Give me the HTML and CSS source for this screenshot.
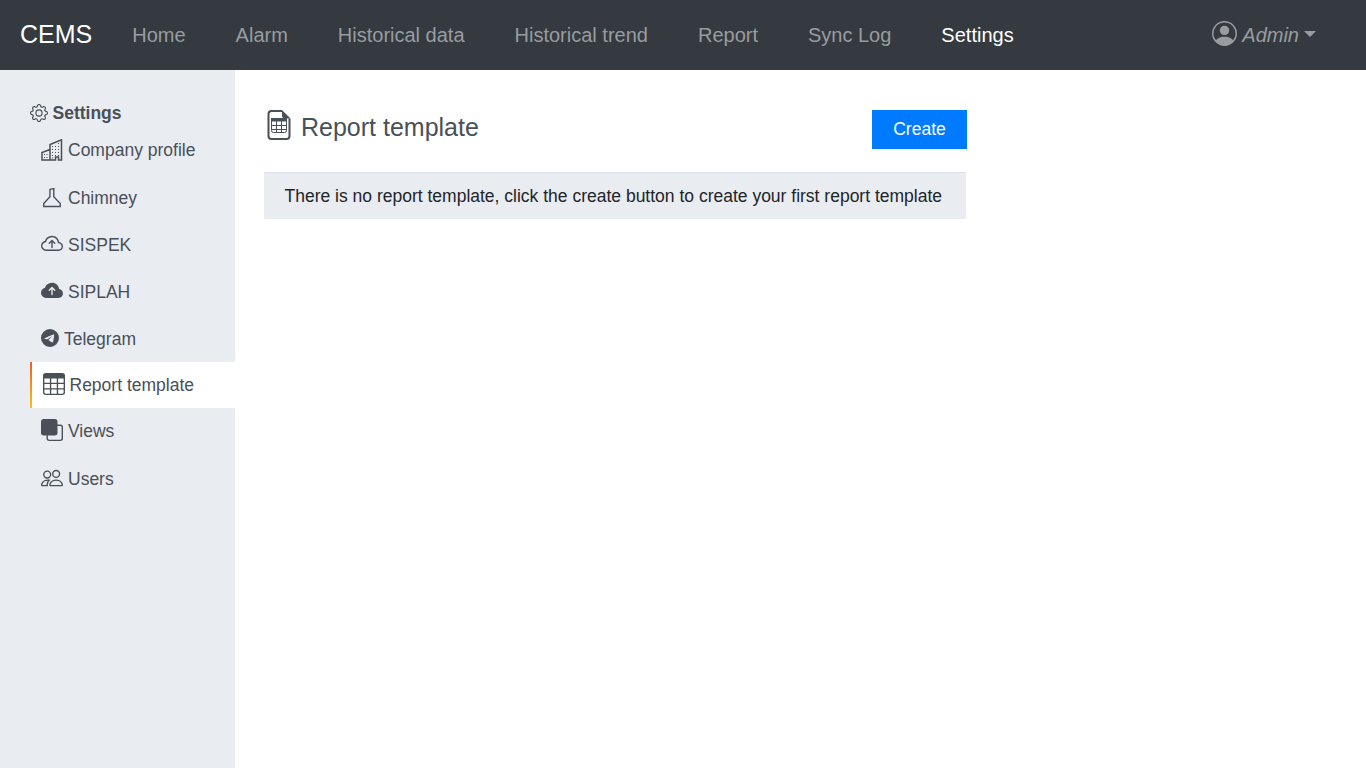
FILE: index.html
```html
<!DOCTYPE html>
<html lang="en">
<head>
<meta charset="utf-8">
<title>CEMS</title>
<link rel="stylesheet" href="styles.css">
</head>
<body>
<header class="navbar">
  <a class="brand">CEMS</a>
  <nav class="nav">
    <a>Home</a><a>Alarm</a><a>Historical data</a><a>Historical trend</a><a>Report</a><a>Sync Log</a><a class="current">Settings</a>
  </nav>
  <div class="account">
    <svg class="avatar" viewBox="0 0 16 16"><path d="M11 6a3 3 0 1 1-6 0 3 3 0 0 1 6 0z"/><path fill-rule="evenodd" d="M0 8a8 8 0 1 1 16 0A8 8 0 0 1 0 8zm8-7a7 7 0 0 0-5.468 11.37C3.242 11.226 4.805 10 8 10s4.757 1.225 5.468 2.37A7 7 0 0 0 8 1z"/></svg>
    <em>Admin</em><span class="caret"></span>
  </div>
</header>
<div class="layout">
  <aside class="sidebar">
    <h2 class="side-title"><svg class="icon small" viewBox="0 0 16 16"><path d="M8 4.754a3.246 3.246 0 1 0 0 6.492 3.246 3.246 0 0 0 0-6.492zM5.754 8a2.246 2.246 0 1 1 4.492 0 2.246 2.246 0 0 1-4.492 0z"/><path d="M9.796 1.343c-.527-1.79-3.065-1.79-3.592 0l-.094.319a.873.873 0 0 1-1.255.52l-.292-.16c-1.64-.892-3.433.902-2.54 2.541l.159.292a.873.873 0 0 1-.52 1.255l-.319.094c-1.79.527-1.79 3.065 0 3.592l.319.094a.873.873 0 0 1 .52 1.255l-.16.292c-.892 1.64.901 3.434 2.541 2.54l.292-.159a.873.873 0 0 1 1.255.52l.094.319c.527 1.79 3.065 1.79 3.592 0l.094-.319a.873.873 0 0 1 1.255-.52l.292.16c1.64.893 3.434-.902 2.54-2.541l-.159-.292a.873.873 0 0 1 .52-1.255l.319-.094c1.79-.527 1.79-3.065 0-3.592l-.319-.094a.873.873 0 0 1-.52-1.255l.16-.292c.893-1.64-.902-3.433-2.541-2.54l-.292.159a.873.873 0 0 1-1.255-.52l-.094-.319zm-2.633.283c.246-.835 1.428-.835 1.674 0l.094.319a1.873 1.873 0 0 0 2.693 1.115l.291-.16c.764-.415 1.6.42 1.184 1.185l-.159.292a1.873 1.873 0 0 0 1.116 2.692l.318.094c.835.246.835 1.428 0 1.674l-.319.094a1.873 1.873 0 0 0-1.115 2.693l.16.291c.415.764-.42 1.6-1.185 1.184l-.291-.159a1.873 1.873 0 0 0-2.693 1.116l-.094.318c-.246.835-1.428.835-1.674 0l-.094-.319a1.873 1.873 0 0 0-2.692-1.115l-.292.16c-.764.415-1.6-.42-1.184-1.185l.159-.291A1.873 1.873 0 0 0 1.945 8.93l-.319-.094c-.835-.246-.835-1.428 0-1.674l.319-.094A1.873 1.873 0 0 0 3.06 4.377l-.16-.292c-.415-.764.42-1.6 1.185-1.184l.292.159a1.873 1.873 0 0 0 2.692-1.115l.094-.319z"/></svg>Settings</h2>
    <ul class="menu">
      <li class="tall first"><svg class="icon" viewBox="0 0 22 22"><path d="M1 21V13.500L9 10.500V5.500L20.500 .8V21H17.500V18H14.500V21zM9 10.500V21" fill="none" stroke="currentColor" stroke-width="1.500"/><path d="M3 15h1v1H3zM5.500 15h1v1h-1zM3 18h1v1H3zM5.500 18h1v1h-1zM11 7h1v1h-1zM14 7h1v1h-1zM17 7h1v1h-1zM17 4h1v1h-1zM11 10h1v1h-1zM14 10h1v1h-1zM17 10h1v1h-1zM11 13h1v1h-1zM14 13h1v1h-1zM17 13h1v1h-1zM11 16h1v1h-1zM14 16h1v1h-1zM17 16h1v1h-1zM11 18.500h1v1h-1z"/></svg>Company profile</li>
      <li><svg class="icon" viewBox="0 0 16 16"><path d="M6.500 1.700L9.300 1.200V7L14 12V14.200H2V12L6.500 7z" fill="none" stroke="currentColor"/></svg>Chimney</li>
      <li><svg class="icon lift" viewBox="0 0 16 16"><path d="M7.646 5.146a.5.5 0 0 1 .708 0l2 2a.5.5 0 0 1-.708.708L8.5 6.707V10.5a.5.5 0 0 1-1 0V6.707L6.354 7.854a.5.5 0 1 1-.708-.708l2-2z"/><path d="M4.406 3.342A5.53 5.53 0 0 1 8 2c2.69 0 4.923 2 5.166 4.579C14.758 6.804 16 8.137 16 9.773 16 11.569 14.502 13 12.687 13H3.781C1.708 13 0 11.366 0 9.318c0-1.763 1.266-3.223 2.942-3.593.143-.863.698-1.723 1.464-2.383zm.653.757c-.757.653-1.153 1.44-1.153 2.056v.448l-.445.049C2.064 6.805 1 7.952 1 9.318 1 10.785 2.23 12 3.781 12h8.906C13.98 12 15 10.988 15 9.773c0-1.216-1.02-2.228-2.313-2.228h-.5v-.5C12.188 4.825 10.328 3 8 3a4.53 4.53 0 0 0-2.941 1.1z"/></svg>SISPEK</li>
      <li><svg class="icon lift" viewBox="0 0 16 16"><path d="M8 2a5.53 5.53 0 0 0-3.594 1.342c-.766.66-1.321 1.52-1.464 2.383C1.266 6.095 0 7.555 0 9.318 0 11.366 1.708 13 3.781 13h8.906C14.502 13 16 11.57 16 9.773c0-1.636-1.242-2.969-2.834-3.194C12.923 3.999 10.69 2 8 2zm2.354 5.146a.5.5 0 0 1-.708.708L8.5 6.707V10.5a.5.5 0 0 1-1 0V6.707L6.354 7.854a.5.5 0 1 1-.708-.708l2-2a.5.5 0 0 1 .708 0l2 2z"/></svg>SIPLAH</li>
      <li class="short"><svg class="icon small" viewBox="0 0 16 16"><path d="M16 8A8 8 0 1 1 0 8a8 8 0 0 1 16 0zM8.287 5.906c-.778.324-2.334.994-4.666 2.01-.378.15-.577.298-.595.442-.03.243.275.339.69.47l.175.055c.408.133.958.288 1.243.294.26.006.549-.1.868-.32 2.179-1.471 3.304-2.214 3.374-2.23.05-.012.12-.026.166.016.047.041.042.12.037.141-.03.129-1.227 1.241-1.846 1.817-.193.18-.33.307-.358.336a8.154 8.154 0 0 1-.188.186c-.38.366-.664.64.015 1.088.327.216.589.393.85.571.284.194.568.387.936.629.093.06.183.125.27.187.331.236.63.448.997.414.214-.02.435-.22.547-.82.265-1.417.786-4.486.906-5.751a1.426 1.426 0 0 0-.013-.315.337.337 0 0 0-.114-.217.526.526 0 0 0-.31-.093c-.3.005-.763.166-2.984 1.09z"/></svg>Telegram</li>
      <li class="active"><svg class="icon" viewBox="0 0 16 16"><path d="M0 2a2 2 0 0 1 2-2h12a2 2 0 0 1 2 2v12a2 2 0 0 1-2 2H2a2 2 0 0 1-2-2V2zm15 2h-4v3h4V4zm0 4h-4v3h4V8zm0 4h-4v3h3a1 1 0 0 0 1-1v-2zm-5 3v-3H6v3h4zm-5 0v-3H1v2a1 1 0 0 0 1 1h3zm-4-4h4V8H1v3zm0-4h4V4H1v3zm5-3v3h4V4H6zm4 4H6v3h4V8z"/></svg>Report template</li>
      <li><svg class="icon lift" viewBox="0 0 16 16"><path d="M0 2a2 2 0 0 1 2-2h8a2 2 0 0 1 2 2v2h2a2 2 0 0 1 2 2v8a2 2 0 0 1-2 2H6a2 2 0 0 1-2-2v-2H2a2 2 0 0 1-2-2V2zm5 10v2a1 1 0 0 0 1 1h8a1 1 0 0 0 1-1V6a1 1 0 0 0-1-1h-2v5a2 2 0 0 1-2 2H5z"/></svg>Views</li>
      <li class="tall"><svg class="icon" viewBox="0 0 16 16"><path d="M15 14s1 0 1-1-1-4-5-4-5 3-5 4 1 1 1 1h8zm-7.978-1A.261.261 0 0 1 7 12.996c.001-.264.167-1.03.76-1.72C8.312 10.629 9.282 10 11 10c1.717 0 2.687.63 3.24 1.276.593.69.758 1.457.76 1.72l-.008.002a.274.274 0 0 1-.014.002H7.022zM11 7a2 2 0 1 0 0-4 2 2 0 0 0 0 4zm3-2a3 3 0 1 1-6 0 3 3 0 0 1 6 0zM6.936 9.28a5.88 5.88 0 0 0-1.23-.247A7.35 7.35 0 0 0 5 9c-4 0-5 3-5 4 0 .667.333 1 1 1h4.216A2.238 2.238 0 0 1 5 13c0-1.01.377-2.042 1.09-2.904.243-.294.526-.569.846-.816zM4.92 10A5.493 5.493 0 0 0 4 13H1c0-.26.164-1.03.76-1.724.545-.636 1.492-1.256 3.16-1.275zM1.5 5.5a3 3 0 1 1 6 0 3 3 0 0 1-6 0zm3-2a2 2 0 1 0 0 4 2 2 0 0 0 0-4z"/></svg>Users</li>
    </ul>
  </aside>
  <main class="content">
    <div class="page-head">
      <h1><svg class="page-icon" viewBox="0 0 30 30"><path d="M18 1H7.500Q4.500 1 4.500 4V26Q4.500 29 7.500 29H22.500Q25.500 29 25.500 26V8.500" fill="none" stroke="currentColor" stroke-width="2"/><path d="M18 0L26.500 8.500H21Q18 8.500 18 5.500z"/><path d="M7.500 9H22.500V20.500Q22.500 22.500 20.500 22.500H9.500Q7.500 22.500 7.500 20.500z" fill="none" stroke="currentColor"/><path d="M7 8H23V11.500H7z"/><path d="M7.500 15.500H22.500M7.500 19.500H22.500M12.500 11V22.500M17.500 11V22.500" stroke="currentColor"/></svg>Report template</h1>
      <button class="create">Create</button>
    </div>
    <div class="notice">There is no report template, click the create button to create your first report template</div>
  </main>
</div>
</body>
</html>
```
FILE: styles.css
```css
* { box-sizing: border-box; }
body { margin: 0; font-family: "Liberation Sans", Arial, sans-serif; font-size: 17.5px; color: #212529; background: #fff; }
h1, h2, ul { margin: 0; padding: 0; }
svg { fill: currentColor; flex: none; }
.navbar { height: 70px; display: flex; align-items: center; padding: 0 50px 0 20px; background: #343a40; color: #999c9f; font-size: 20px; }
.brand { color: #fff; font-size: 25px; margin-top: -2px; }
.nav { display: flex; gap: 50px; margin-left: 40px; }
.nav .current { color: #fff; }
.account { margin-left: auto; display: flex; align-items: center; }
.avatar { width: 25px; height: 25px; margin: -3px 5.5px 0 0; }
.caret { margin: -2px 0 0 5px; border: 6px solid transparent; border-top-color: currentColor; border-bottom: 0; }
.layout { display: flex; height: 698px; }
.sidebar { width: 235px; background: #e9ecf1; color: #495057; padding: 30px 0 0 30px; }
.side-title { height: 26px; display: flex; align-items: center; gap: 4.5px; font-size: 17.5px; }
.icon { width: 22px; height: 22px; }
.icon.small { width: 18px; height: 18px; }
.menu { list-style: none; padding-top: 1px; }
.menu li { height: 47px; padding-left: 11px; display: flex; align-items: center; gap: 5px; }
.menu .icon { margin-bottom: 2px; }
.menu .icon.lift { margin-bottom: 4px; }
.menu .tall { height: 48px; }
.menu .short { height: 46px; }
.menu .first { padding-bottom: 2px; }
.menu .first .icon { margin-bottom: 0; }
.menu li.active { height: 46px; padding-left: 10.5px; background: #fff; border-left: 2px solid; border-image: linear-gradient(#f05a28, #fdc20f) 1; }
.content { padding: 40px 0 0 29px; width: 732px; }
.page-head { height: 62px; display: flex; justify-content: space-between; align-items: flex-start; }
h1 { display: flex; align-items: center; gap: 7px; font-size: 25px; font-weight: 400; color: #495057; height: 35px; }
.page-icon { width: 30px; height: 30px; margin-top: -5px; }
.create { width: 95px; height: 39px; padding: 0; border: 0; background: #007bff; color: #fff; font: inherit; }
.notice { width: 702px; height: 47px; padding: 0 20.5px; border-top: 1px solid #dee2e6; background: #e9ecf1; line-height: 47px; white-space: nowrap; }
```
